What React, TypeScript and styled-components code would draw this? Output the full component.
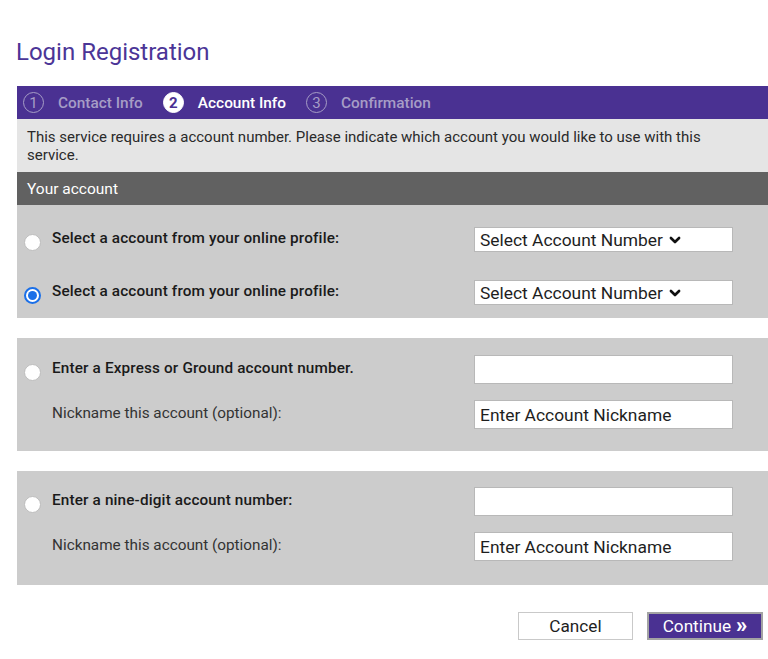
import React from "react";
import styled, { createGlobalStyle } from "styled-components";

const PURPLE = "#4a3192";

const Global = createGlobalStyle`
  html, body { margin: 0; padding: 0; background: #fff; }
  body { font-family: Roboto, "Liberation Sans", Arial, sans-serif; color: #222; }
  * { box-sizing: border-box; }
`;

const Page = styled.div`
  width: 768px;
  padding: 38px 0 0 17px;
  overflow: hidden;
`;

const Title = styled.h1`
  margin: 0 0 20px -1px;
  font-size: 24px;
  line-height: 28px;
  font-weight: 400;
  color: #4b3597;
`;

const Steps = styled.div`
  height: 33px;
  background: ${PURPLE};
  display: flex;
  align-items: center;
  padding-left: 6px;
`;

const Step = styled.div<{ $active?: boolean }>`
  display: flex;
  align-items: center;
  gap: 14px;
  margin-right: 20px;
  font-size: 15.4px;
  font-weight: 500;
  color: ${(p) => (p.$active ? "#fff" : "#a69dc6")};
`;

const StepNum = styled.span<{ $active?: boolean }>`
  width: 21px;
  height: 21px;
  border-radius: 50%;
  display: flex;
  align-items: center;
  justify-content: center;
  font-size: 15px;
  font-weight: ${(p) => (p.$active ? 700 : 400)};
  border: 1.5px solid ${(p) => (p.$active ? "#fff" : "#a69dc6")};
  background: ${(p) => (p.$active ? "#fff" : "transparent")};
  color: ${(p) => (p.$active ? PURPLE : "#a69dc6")};
`;

const Info = styled.div`
  background: #e5e5e5;
  padding: 9px 40px 8px 10px;
  font-size: 15px;
  line-height: 18px;
  color: #2a2a2a;
`;

const SectionHeader = styled.div`
  height: 33px;
  background: #616161;
  color: #fff;
  font-size: 15.5px;
  display: flex;
  align-items: center;
  padding-left: 10px;
`;

const Panel = styled.div<{ $pt: number; $pb: number; $gap: number; $mt?: number }>`
  background: #cccccc;
  padding: ${(p) => p.$pt}px 35px ${(p) => p.$pb}px 0;
  margin-top: ${(p) => p.$mt ?? 0}px;
  display: flex;
  flex-direction: column;
  gap: ${(p) => p.$gap}px;
`;

const Row = styled.div<{ $h: number }>`
  display: grid;
  grid-template-columns: 35px 1fr 259px;
  align-items: center;
  height: ${(p) => p.$h}px;
`;

const RadioDot = styled.span<{ $checked?: boolean }>`
  justify-self: end;
  margin: 5px 11px 0 0;
  width: 17px;
  height: 17px;
  border-radius: 50%;
  background: #fff;
  border: ${(p) => (p.$checked ? "2px solid #1a6fe8" : "1px solid #bdbdbd")};
  display: flex;
  align-items: center;
  justify-content: center;
  &::after {
    content: "";
    display: ${(p) => (p.$checked ? "block" : "none")};
    width: 9px;
    height: 9px;
    border-radius: 50%;
    background: #1a6fe8;
  }
`;

const Label = styled.span<{ $bold?: boolean }>`
  font-size: 15.3px;
  margin-top: -3px;
  font-weight: ${(p) => (p.$bold ? 500 : 400)};
  letter-spacing: ${(p) => (p.$bold ? "0.15px" : "0")};
  color: ${(p) => (p.$bold ? "#1a1a1a" : "#333")};
  grid-column: 2;
`;

const SelectBox = styled.div`
  grid-column: 3;
  height: 25px;
  background: #fff;
  border: 1px solid #b8b8b8;
  display: flex;
  align-items: center;
  gap: 5px;
  padding-left: 5px;
  font-size: 17.4px;
  color: #1e1e1e;
`;

const TextBox = styled.div`
  grid-column: 3;
  height: 29px;
  background: #fff;
  border: 1px solid #b8b8b8;
  display: flex;
  align-items: center;
  padding-left: 5px;
  font-size: 17.4px;
  color: #1e1e1e;
`;

const Actions = styled.div`
  display: flex;
  justify-content: flex-end;
  gap: 14px;
  margin-top: 27px;
  padding-right: 5px;
`;

const Button = styled.button<{ $primary?: boolean }>`
  width: ${(p) => (p.$primary ? 116 : 115)}px;
  height: 28px;
  font-family: Roboto, "Liberation Sans", Arial, sans-serif;
  font-size: 17.2px;
  padding: 0;
  cursor: pointer;
  display: flex;
  align-items: center;
  justify-content: center;
  background: ${(p) => (p.$primary ? PURPLE : "#fff")};
  color: ${(p) => (p.$primary ? "#fff" : "#1e1e1e")};
  border: ${(p) => (p.$primary ? "2px solid #a3a3a3" : "1px solid #c9c9c9")};
`;

const Arrows = styled.span`
  font-weight: 900;
  font-size: 22px;
  line-height: 1;
  margin-left: 5px;
  margin-top: -2px;
`;

const Chevron = () => (
  <svg width="14" height="14" viewBox="0 0 24 24" fill="none" stroke="#111" strokeWidth="4.5" strokeLinecap="round" strokeLinejoin="round">
    <path d="M5 8.5l7 7 7-7" />
  </svg>
);

export default function App() {
  return (
    <>
      <Global />
      <Page>
        <Title>Login Registration</Title>
        <Steps>
          <Step>
            <StepNum>1</StepNum>Contact Info
          </Step>
          <Step $active>
            <StepNum $active>2</StepNum>Account Info
          </Step>
          <Step>
            <StepNum>3</StepNum>Confirmation
          </Step>
        </Steps>
        <Info>
          This service requires a account number. Please indicate which account you would like to use with this service.
        </Info>
        <SectionHeader>Your account</SectionHeader>

        <Panel $pt={22} $pb={13} $gap={28}>
          <Row $h={25}>
            <RadioDot />
            <Label $bold>Select a account from your online profile:</Label>
            <SelectBox>
              Select Account Number <Chevron />
            </SelectBox>
          </Row>
          <Row $h={25}>
            <RadioDot $checked />
            <Label $bold>Select a account from your online profile:</Label>
            <SelectBox>
              Select Account Number <Chevron />
            </SelectBox>
          </Row>
        </Panel>

        <Panel $pt={17} $pb={22} $gap={16} $mt={20}>
          <Row $h={29}>
            <RadioDot />
            <Label $bold>Enter a Express or Ground account number.</Label>
            <TextBox />
          </Row>
          <Row $h={29}>
            <Label>Nickname this account (optional):</Label>
            <TextBox>Enter Account Nickname</TextBox>
          </Row>
        </Panel>

        <Panel $pt={16} $pb={24} $gap={16} $mt={20}>
          <Row $h={29}>
            <RadioDot />
            <Label $bold>Enter a nine-digit account number:</Label>
            <TextBox />
          </Row>
          <Row $h={29}>
            <Label>Nickname this account (optional):</Label>
            <TextBox>Enter Account Nickname</TextBox>
          </Row>
        </Panel>

        <Actions>
          <Button>Cancel</Button>
          <Button $primary>
            Continue<Arrows>»</Arrows>
          </Button>
        </Actions>
      </Page>
    </>
  );
}
